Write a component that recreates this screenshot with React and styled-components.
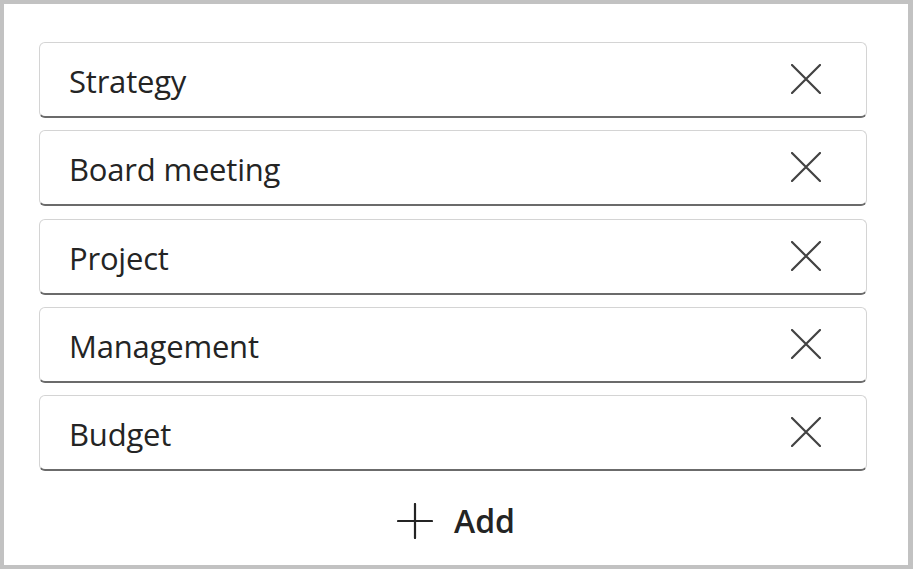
import styled, { createGlobalStyle } from "styled-components";

const GlobalStyle = createGlobalStyle`
  html, body {
    margin: 0;
    padding: 0;
    background: #ffffff;
  }
  * {
    box-sizing: border-box;
  }
`;

const Frame = styled.div`
  width: 913px;
  height: 569px;
  border: 4px solid #c2c2c2;
  border-right-width: 5px;
  background: #ffffff;
  padding: 38px 41px 0 35px;
  display: flex;
  flex-direction: column;
  font-family: "Open Sans", "Noto Sans", sans-serif;
`;

const List = styled.div`
  display: flex;
  flex-direction: column;
  gap: 12.3px;
`;

const Row = styled.div`
  height: 76px;
  display: flex;
  align-items: center;
  justify-content: space-between;
  padding: 3px 44px 0 29px;
  border: 1px solid #d4d4d4;
  border-bottom: 2px solid #6b6b6b;
  border-radius: 6px;
  background: #ffffff;
`;

const Label = styled.span`
  font-size: 31px;
  color: #242424;
  letter-spacing: -0.2px;
`;

const RemoveButton = styled.button`
  width: 32px;
  height: 32px;
  margin-top: -4px;
  padding: 0;
  border: none;
  background: none;
  display: flex;
  align-items: center;
  justify-content: center;
  color: #424242;
  cursor: pointer;
`;

const AddButton = styled.button`
  align-self: center;
  margin-top: 28px;
  margin-left: 6px;
  display: flex;
  align-items: center;
  gap: 21px;
  border: none;
  background: none;
  padding: 0;
  font-family: inherit;
  font-size: 32px;
  font-weight: 600;
  color: #242424;
  cursor: pointer;
`;

const CloseIcon = () => (
  <svg width="30" height="30" viewBox="0 0 30 30">
    <path d="M1 1 L29 29 M29 1 L1 29" stroke="currentColor" strokeWidth="2.2" strokeLinecap="round" />
  </svg>
);

const PlusIcon = () => (
  <svg width="36" height="36" viewBox="0 0 36 36">
    <path d="M18 1 V35 M1 18 H35" stroke="currentColor" strokeWidth="2.2" strokeLinecap="round" />
  </svg>
);

const tags = ["Strategy", "Board meeting", "Project", "Management", "Budget"];

const App = () => {
  return (
    <>
      <GlobalStyle />
      <Frame>
        <List>
          {tags.map((tag) => (
            <Row key={tag}>
              <Label>{tag}</Label>
              <RemoveButton aria-label={`Remove ${tag}`}>
                <CloseIcon />
              </RemoveButton>
            </Row>
          ))}
        </List>
        <AddButton>
          <PlusIcon />
          Add
        </AddButton>
      </Frame>
    </>
  );
};

export default App;
